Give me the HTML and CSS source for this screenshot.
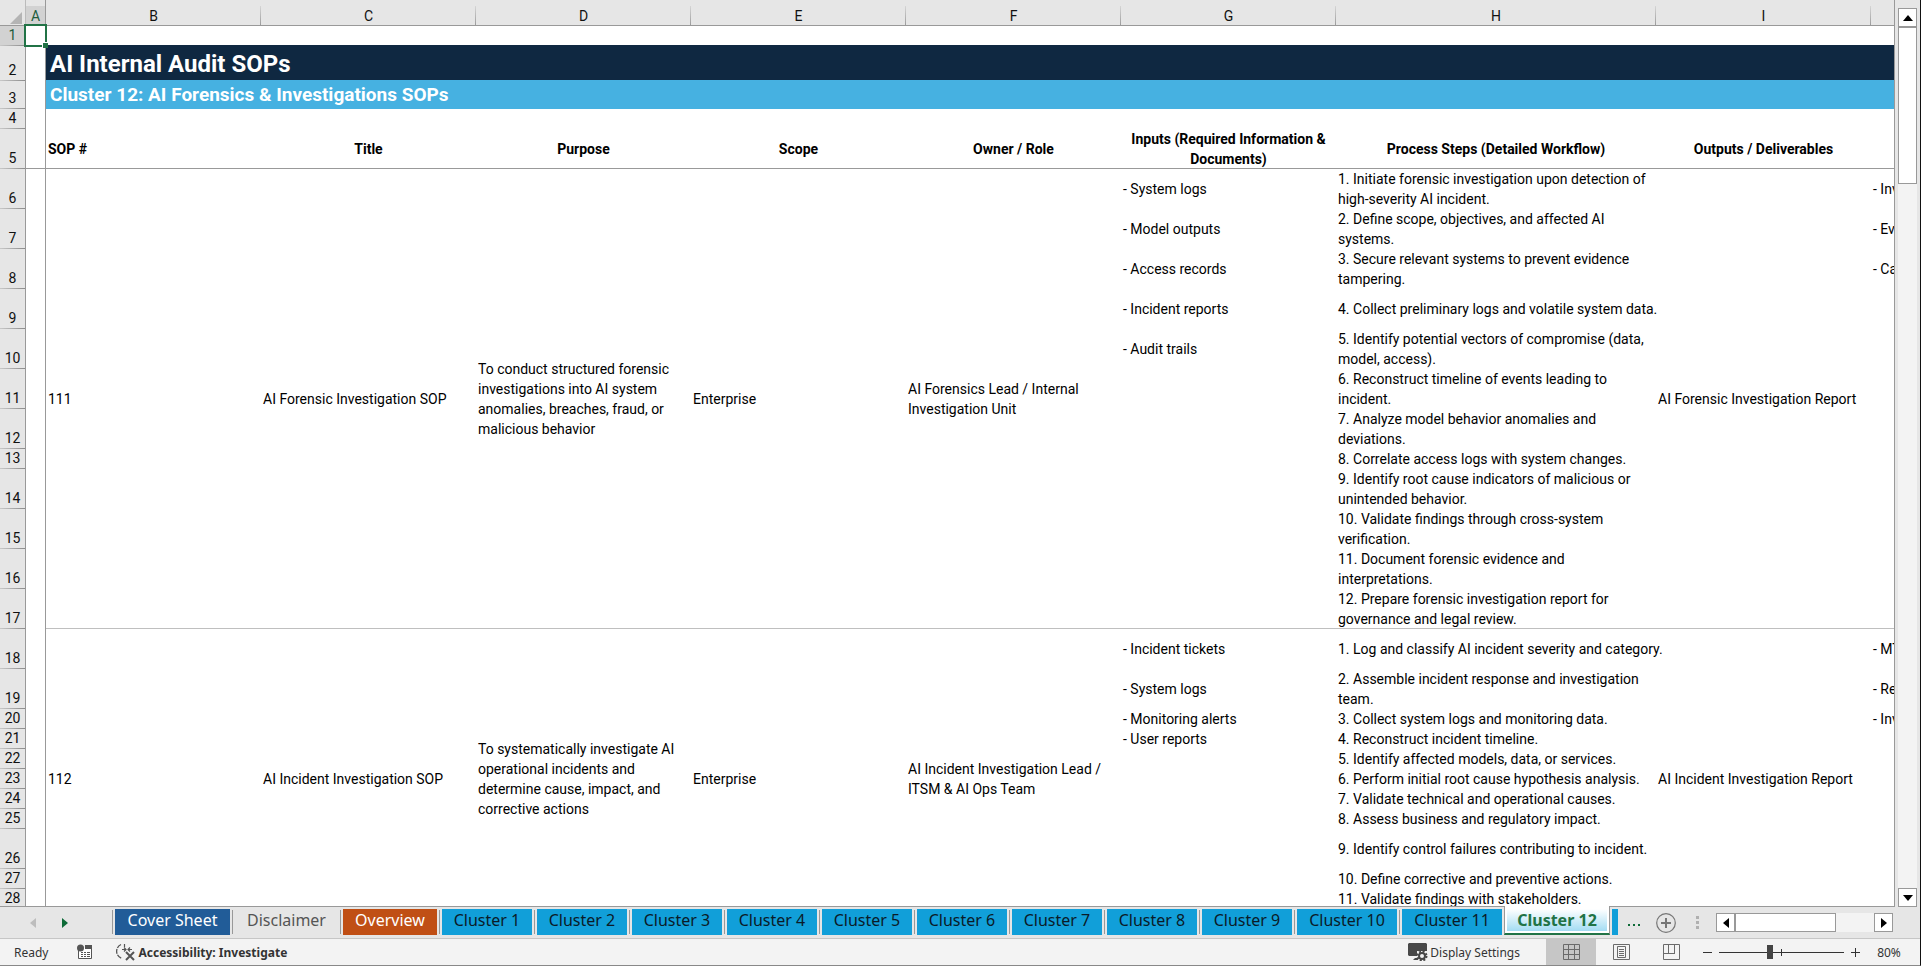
FILE: index.html
```
<!DOCTYPE html>
<html lang="en">
<head>
    <meta charset="UTF-8">
    <meta name="viewport" content="width=device-width, initial-scale=1.0">
    <title>AI Internal Audit SOPs</title>
    <link rel="stylesheet" href="styles.css">
</head>
<body>
    <div class="app">
        <main class="workspace">
            <div class="sheet">
                <table class="grid">
                    <colgroup>
                        <col class="col-head">
                        <col class="col-a">
                        <col class="col-std" span="6">
                        <col class="col-wide">
                        <col class="col-std" span="2">
                    </colgroup>
                    <thead>
                        <tr class="letters">
                            <th class="corner"><svg width="12" height="12" viewBox="0 0 12 12"><path d="M12 0v12H0z" fill="#b4b4b4"/></svg></th>
                            <th class="selected">A</th>
                            <th>B</th>
                            <th>C</th>
                            <th>D</th>
                            <th>E</th>
                            <th>F</th>
                            <th>G</th>
                            <th>H</th>
                            <th>I</th>
                            <th></th>
                        </tr>
                    </thead>
                    <tbody>
                        <tr class="h20"><th class="selected">1</th><td class="active-cell"><span class="cursor"></span></td><td colspan="9"></td></tr>
                        <tr class="h35"><th>2</th><td class="a"></td><td class="banner" colspan="9">AI Internal Audit SOPs</td></tr>
                        <tr class="h28"><th>3</th><td class="a"></td><td class="subbanner" colspan="9">Cluster 12: AI Forensics &amp; Investigations SOPs</td></tr>
                        <tr class="h20"><th>4</th><td class="a"></td><td colspan="9"></td></tr>
                        <tr class="h40 headings">
                            <th>5</th>
                            <td class="a"></td>
                            <td class="first">SOP #</td>
                            <td>Title</td>
                            <td>Purpose</td>
                            <td>Scope</td>
                            <td>Owner / Role</td>
                            <td>Inputs (Required Information &amp; Documents)</td>
                            <td>Process Steps (Detailed Workflow)</td>
                            <td>Outputs / Deliverables</td>
                            <td></td>
                        </tr>

                        <!-- SOP 111 -->
                        <tr class="h40">
                            <th>6</th>
                            <td class="a"></td>
                            <td class="end" rowspan="12">111</td>
                            <td class="end" rowspan="12">AI Forensic Investigation SOP</td>
                            <td class="end" rowspan="12">To conduct structured forensic<br>investigations into AI system<br>anomalies, breaches, fraud, or<br>malicious behavior</td>
                            <td class="end" rowspan="12">Enterprise</td>
                            <td class="end" rowspan="12">AI Forensics Lead / Internal<br>Investigation Unit</td>
                            <td>- System logs</td>
                            <td>1. Initiate forensic investigation upon detection of<br>high-severity AI incident.</td>
                            <td class="end" rowspan="12">AI Forensic Investigation Report</td>
                            <td>- Inv</td>
                        </tr>
                        <tr class="h40"><th>7</th><td class="a"></td><td>- Model outputs</td><td>2. Define scope, objectives, and affected AI<br>systems.</td><td>- Ev</td></tr>
                        <tr class="h40"><th>8</th><td class="a"></td><td>- Access records</td><td>3. Secure relevant systems to prevent evidence<br>tampering.</td><td>- Ca</td></tr>
                        <tr class="h40"><th>9</th><td class="a"></td><td>- Incident reports</td><td>4. Collect preliminary logs and volatile system data.</td><td></td></tr>
                        <tr class="h40"><th>10</th><td class="a"></td><td>- Audit trails</td><td>5. Identify potential vectors of compromise (data,<br>model, access).</td><td></td></tr>
                        <tr class="h40"><th>11</th><td class="a"></td><td></td><td>6. Reconstruct timeline of events leading to<br>incident.</td><td></td></tr>
                        <tr class="h40"><th>12</th><td class="a"></td><td></td><td>7. Analyze model behavior anomalies and<br>deviations.</td><td></td></tr>
                        <tr class="h20"><th>13</th><td class="a"></td><td></td><td>8. Correlate access logs with system changes.</td><td></td></tr>
                        <tr class="h40"><th>14</th><td class="a"></td><td></td><td>9. Identify root cause indicators of malicious or<br>unintended behavior.</td><td></td></tr>
                        <tr class="h40"><th>15</th><td class="a"></td><td></td><td>10. Validate findings through cross-system<br>verification.</td><td></td></tr>
                        <tr class="h40"><th>16</th><td class="a"></td><td></td><td>11. Document forensic evidence and<br>interpretations.</td><td></td></tr>
                        <tr class="h40"><th>17</th><td class="a"></td><td class="end"></td><td class="end">12. Prepare forensic investigation report for<br>governance and legal review.</td><td class="end"></td></tr>

                        <!-- SOP 112 -->
                        <tr class="h40">
                            <th>18</th>
                            <td class="a"></td>
                            <td rowspan="12">112</td>
                            <td rowspan="12">AI Incident Investigation SOP</td>
                            <td rowspan="12">To systematically investigate AI<br>operational incidents and<br>determine cause, impact, and<br>corrective actions</td>
                            <td rowspan="12">Enterprise</td>
                            <td rowspan="12">AI Incident Investigation Lead /<br>ITSM &amp; AI Ops Team</td>
                            <td>- Incident tickets</td>
                            <td>1. Log and classify AI incident severity and category.</td>
                            <td rowspan="12">AI Incident Investigation Report</td>
                            <td>- MT</td>
                        </tr>
                        <tr class="h40"><th>19</th><td class="a"></td><td>- System logs</td><td>2. Assemble incident response and investigation<br>team.</td><td>- Re</td></tr>
                        <tr class="h20"><th>20</th><td class="a"></td><td>- Monitoring alerts</td><td>3. Collect system logs and monitoring data.</td><td>- Inv</td></tr>
                        <tr class="h20"><th>21</th><td class="a"></td><td>- User reports</td><td>4. Reconstruct incident timeline.</td><td></td></tr>
                        <tr class="h20"><th>22</th><td class="a"></td><td></td><td>5. Identify affected models, data, or services.</td><td></td></tr>
                        <tr class="h20"><th>23</th><td class="a"></td><td></td><td>6. Perform initial root cause hypothesis analysis.</td><td></td></tr>
                        <tr class="h20"><th>24</th><td class="a"></td><td></td><td>7. Validate technical and operational causes.</td><td></td></tr>
                        <tr class="h20"><th>25</th><td class="a"></td><td></td><td>8. Assess business and regulatory impact.</td><td></td></tr>
                        <tr class="h40"><th>26</th><td class="a"></td><td></td><td>9. Identify control failures contributing to incident.</td><td></td></tr>
                        <tr class="h20"><th>27</th><td class="a"></td><td></td><td>10. Define corrective and preventive actions.</td><td></td></tr>
                        <tr class="h20"><th>28</th><td class="a"></td><td></td><td>11. Validate findings with stakeholders.</td><td></td></tr>
                        <tr class="h20"><th></th><td class="a"></td><td></td><td></td><td></td></tr>
                    </tbody>
                </table>
            </div>
            <div class="vscroll">
                <button class="scroll-btn" aria-label="Scroll up"><svg width="10" height="6" viewBox="0 0 10 6"><path d="M5 0l5 6H0z"/></svg></button>
                <div class="vthumb"></div>
                <div class="track"></div>
                <button class="scroll-btn" aria-label="Scroll down"><svg width="10" height="6" viewBox="0 0 10 6"><path d="M0 0h10L5 6z"/></svg></button>
            </div>
        </main>

        <nav class="tabbar">
            <div class="tab-nav">
                <button class="plain" aria-label="Previous sheets"><svg width="6" height="10" viewBox="0 0 6 10"><path d="M6 0v10L0 5z" fill="#bdbdbd"/></svg></button>
                <button class="plain" aria-label="Next sheets"><svg width="6" height="10" viewBox="0 0 6 10"><path d="M0 0v10l6-5z" fill="#0e6b38"/></svg></button>
            </div>
            <ul class="tabs">
                <li><button class="tab cover">Cover Sheet</button></li>
                <li><button class="tab disclaimer">Disclaimer</button></li>
                <li><button class="tab overview">Overview</button></li>
                <li><button class="tab">Cluster 1</button></li>
                <li><button class="tab">Cluster 2</button></li>
                <li><button class="tab">Cluster 3</button></li>
                <li><button class="tab">Cluster 4</button></li>
                <li><button class="tab">Cluster 5</button></li>
                <li><button class="tab">Cluster 6</button></li>
                <li><button class="tab">Cluster 7</button></li>
                <li><button class="tab">Cluster 8</button></li>
                <li><button class="tab">Cluster 9</button></li>
                <li><button class="tab two-digit">Cluster 10</button></li>
                <li><button class="tab two-digit">Cluster 11</button></li>
                <li class="current"><button class="tab">Cluster 12</button></li>
                <li class="next"></li>
            </ul>
            <button class="plain more" aria-label="More sheets"><svg width="12" height="2" viewBox="0 0 12 2" fill="#0e6b38"><path d="M0 0h2v2H0zM5 0h2v2H5zM10 0h2v2h-2z"/></svg></button>
            <button class="plain add" aria-label="New sheet"><svg width="20" height="20" viewBox="0 0 20 20" fill="none" stroke="#767676"><circle cx="10" cy="10" r="9.3" stroke-width="1.2"/><path d="M10 5v10M5 10h10" stroke-width="2"/></svg></button>
            <svg class="grip" width="3" height="13" viewBox="0 0 3 13" fill="#b0b0b0"><path d="M0 0h3v3H0zM0 5h3v3H0zM0 10h3v3H0z"/></svg>
            <div class="hscroll">
                <button class="scroll-btn" aria-label="Scroll left"><svg width="6" height="10" viewBox="0 0 6 10"><path d="M6 0v10L0 5z"/></svg></button>
                <div class="hthumb"></div>
                <div class="track"></div>
                <button class="scroll-btn" aria-label="Scroll right"><svg width="6" height="10" viewBox="0 0 6 10"><path d="M0 0v10l6-5z"/></svg></button>
            </div>
        </nav>

        <footer class="status">
            <span class="ready">Ready</span>
            <button class="plain macro" aria-label="Record macro"><svg width="16" height="16" viewBox="0 0 16 16"><path d="M1.5 5v9.500h13V2" fill="#fff" stroke="#555"/><path d="M8 1h7v4H8z" fill="#555"/><circle cx="3.500" cy="4" r="3.500" fill="#555"/><path d="M4 8.500h2M7 8.500h2M10 8.500h3M4 10.500h2M7 10.500h2M10 10.500h3M4 12.500h2M7 12.500h2M10 12.500h3" stroke="#555"/></svg></button>
            <button class="plain accessibility"><svg width="20" height="18" viewBox="0 0 20 18" fill="none" stroke="#555"><path d="M5 1.500A7.500 7.500 0 0 0 6 15.500" stroke-width="1.300" stroke-dasharray="5 1"/><path d="M6 6.500h4M12 6.500h4M8 4.500l2 2-2 2M14 4.500l-2 2 2 2M8.500 1v3" stroke-width="1.200"/><path d="M10 9l8 8M18 9l-8 8" stroke-width="2"/></svg>Accessibility: Investigate</button>
            <button class="plain display"><svg width="20" height="18" viewBox="0 0 20 18"><path d="M1 0h17l1 1v7H9v5H1l-1-1V1z" fill="#484848"/><path d="M5 17l2-2h3v2z" fill="#484848"/><circle cx="14" cy="13" r="3" fill="#f3f3f3" stroke="#484848" stroke-width="2"/><circle cx="14" cy="13" r="4.500" fill="none" stroke="#484848" stroke-width="2" stroke-dasharray="2 1.530"/></svg>Display Settings</button>
            <div class="views">
                <button class="plain on" aria-label="Normal view"><svg width="17" height="16" viewBox="0 0 17 16" fill="none" stroke="#6a6a6a"><path d="M.5.5h16v15H.5zM.5 5.500h16M.5 10.500h16M5.500 0v16M11.500 0v16"/></svg></button>
                <button class="plain" aria-label="Page layout"><svg width="17" height="16" viewBox="0 0 17 16" fill="none" stroke="#6a6a6a"><path d="M.5.5h16v15H.5zM4.500 2.500h8v11h-8zM6 5.500h5M6 7.500h5M6 9.500h5M6 11.500h5"/></svg></button>
                <button class="plain" aria-label="Page break preview"><svg width="17" height="16" viewBox="0 0 17 16" fill="none" stroke="#6a6a6a"><path d="M.5.5h16v15H.5zM5.500 0v9.500M11.500 0v9.500M0 9.500h12"/></svg></button>
            </div>
            <button class="plain step" aria-label="Zoom out"><svg width="9" height="9" viewBox="0 0 9 9"><path d="M0 4.500h9" stroke="#333"/></svg></button>
            <input class="zoom" type="range" min="0" max="100" value="40" aria-label="Zoom">
            <button class="plain step" aria-label="Zoom in"><svg width="9" height="9" viewBox="0 0 9 9"><path d="M0 4.500h9M4.500 0v9" stroke="#333"/></svg></button>
            <button class="plain percent">80%</button>
        </footer>
    </div>
</body>
</html>
```
FILE: styles.css
```
* {
    box-sizing: border-box;
}
body {
    margin: 0;
    font-family: Roboto, "Liberation Sans", sans-serif;
    font-size: 14px;
    color: #000;
    background: #e6e6e6;
}
button {
    font-family: inherit;
    font-size: inherit;
    color: inherit;
    border: none;
    padding: 0;
    cursor: pointer;
}
svg {
    display: block;
}
.plain {
    background: none;
    display: flex;
    align-items: center;
    justify-content: center;
}
.app {
    height: 100vh;
    display: flex;
    flex-direction: column;
    border-right: 1px solid #111;
    border-bottom: 1px solid #888;
}

/* worksheet */
.workspace {
    flex: 1;
    min-height: 0;
    display: flex;
}
.sheet {
    flex: 1;
    min-width: 0;
    overflow: hidden;
    border-right: 1px solid #999;
    border-bottom: 1px solid #999;
}
.grid {
    table-layout: fixed;
    width: 2086px;
    border-collapse: separate;
    border-spacing: 0;
    background: #fff;
}
.col-head {
    width: 26px;
}
.col-a {
    width: 20px;
}
.col-std {
    width: 215px;
}
.col-wide {
    width: 320px;
}
.grid td {
    padding: 0 2px;
    line-height: 20px;
    vertical-align: middle;
    white-space: nowrap;
}
.grid th {
    padding: 0;
    font-weight: normal;
    line-height: 18px;
    color: #111;
}
.letters th {
    height: 26px;
    padding-top: 7px;
    border-bottom: 1px solid #999;
    background: linear-gradient(to bottom, #d5d5d5, #999) right 6px / 1px 20px no-repeat #e6e6e6;
}
.letters .selected {
    background: linear-gradient(#d2d2d2, #d2d2d2) 0 6px no-repeat #e6e6e6;
    border-right: 1px solid #999;
    color: #215c3c;
}
.letters .corner {
    padding: 10px 0 0 10px;
    background: #e6e6e6;
    border-right: 1px solid #bbb;
}
.grid tbody th {
    padding-bottom: 2px;
    vertical-align: bottom;
    border-right: 1px solid #999;
    background: linear-gradient(to right, #c8c8c8, #8c8c8c) left bottom / 100% 1px no-repeat #e6e6e6;
}
.grid tbody th.selected {
    background-color: #d2d2d2;
    color: #215c3c;
}
.h20 {
    height: 20px;
}
.h28 {
    height: 28px;
}
.h35 {
    height: 35px;
}
.h40 {
    height: 40px;
}
.grid .a,
.grid .active-cell {
    padding: 0;
    border-right: 1px solid #999;
}
.active-cell {
    position: relative;
}
.cursor {
    position: absolute;
    z-index: 1;
    inset: -2px -2px -1px -2px;
    border: 2px solid #217346;
}
.cursor::after {
    content: "";
    position: absolute;
    right: -3px;
    bottom: -3px;
    width: 5px;
    height: 5px;
    background: #217346;
    border-left: 1px solid #fff;
    border-top: 1px solid #fff;
}
.grid .banner {
    padding-left: 4px;
    background: #0f2841;
    box-shadow: 0 -1px #0f2841;
    color: #fff;
    font-size: 24px;
    font-weight: bold;
}
.grid .subbanner {
    padding-left: 4px;
    background: #46b1e1;
    box-shadow: 0 -1px #46b1e1;
    color: #fff;
    font-size: 19px;
    font-weight: bold;
}
.grid .headings td {
    box-shadow: inset 0 -1px #999;
    font-weight: bold;
    text-align: center;
    white-space: normal;
}
.grid .headings .first {
    text-align: left;
}
.grid .end {
    box-shadow: inset 0 -1px #bfbfbf;
}

/* scrollbars */
.vscroll {
    width: 25px;
    padding: 8px 3px 0;
    display: flex;
    flex-direction: column;
}
.scroll-btn {
    flex: none;
    width: 19px;
    height: 19px;
    display: flex;
    align-items: center;
    justify-content: center;
    background: #fff;
    border: 1px solid #999;
}
.vthumb {
    height: 157px;
    background: #fff;
    border: 1px solid #999;
}
.track {
    flex: 1;
    background: #f3f3f3;
}
.hscroll {
    flex: none;
    width: 177px;
    display: flex;
}
.hthumb {
    width: 101px;
    background: #fff;
    border: 1px solid #999;
}

/* sheet tabs */
.tabbar {
    height: 32px;
    display: flex;
    align-items: center;
    padding-right: 27px;
    border-bottom: 1px solid #c6c6c6;
    font-family: "Noto Sans", "Open Sans", sans-serif;
    font-size: 16px;
}
.tab-nav {
    width: 112px;
    flex: none;
    display: flex;
    gap: 26px;
    padding-left: 30px;
}
.tabs {
    flex: none;
    align-self: flex-start;
    display: flex;
    margin: 0;
    padding: 0;
    list-style: none;
}
.tabs li {
    margin-left: 1px;
    padding: 2px 2px 0;
    position: relative;
}
.tabs li::before {
    content: "";
    position: absolute;
    left: -1px;
    top: 3px;
    width: 1px;
    height: 24px;
    background: #999;
}
.tab {
    display: block;
    width: 90px;
    height: 26px;
    padding-bottom: 3px;
    line-height: 23px;
    background: #119fd9;
    color: #0b1b28;
}
.tab.cover {
    width: 115px;
    background: #215c98;
    color: #fff;
}
.tab.disclaimer {
    width: 103px;
    background: none;
    color: #555;
}
.tab.overview {
    width: 94px;
    background: #c04f15;
    color: #fff;
}
.tab.two-digit {
    width: 100px;
}
.tabs .current {
    margin-left: 0;
    margin-top: -1px;
    padding: 3px 2px 2px;
    background: #fff;
    border-left: 1px solid #999;
    border-right: 1px solid #999;
    border-bottom: 2px solid #217346;
}
.tabs .next {
    margin-left: 0;
}
.current .tab {
    width: 100px;
    height: 22px;
    padding: 0;
    line-height: 22px;
    background: linear-gradient(#fff, #a3dcf3);
    color: #217346;
    font-weight: bold;
}
.tabs .current::before,
.tabs .next::before {
    display: none;
}
.tabs .next::after {
    content: "";
    display: block;
    width: 6px;
    height: 26px;
    background: #119fd9;
}
.more {
    margin-left: 8px;
    padding-top: 4px;
}
.add {
    margin-left: 16px;
}
.grip {
    margin: 0 auto 0 20px;
}

/* status bar */
.status {
    height: 26px;
    display: flex;
    align-items: center;
    background: #f3f3f3;
    padding: 0 18px 0 14px;
    font-family: "Noto Sans", "Open Sans", sans-serif;
    font-size: 12px;
    color: #333;
}
.macro {
    margin-left: 29px;
}
.accessibility {
    margin-left: 23px;
    gap: 2px;
    font-weight: bold;
}
.display {
    margin-left: auto;
    gap: 2px;
}
.views {
    display: flex;
    align-self: stretch;
    margin-left: 26px;
}
.views button {
    width: 50px;
}
.views .on {
    background: #c6c6c6;
}
.step {
    margin-left: 7px;
}
.zoom {
    appearance: none;
    width: 125px;
    height: 14px;
    margin: 0 0 0 7px;
    background:
        linear-gradient(#333, #333) center / 1px 7px no-repeat,
        linear-gradient(#333, #333) center / 100% 1px no-repeat;
}
.zoom::-webkit-slider-thumb {
    appearance: none;
    width: 6px;
    height: 14px;
    background: #444;
}
.percent {
    width: 26px;
    margin-left: 16px;
}
```
